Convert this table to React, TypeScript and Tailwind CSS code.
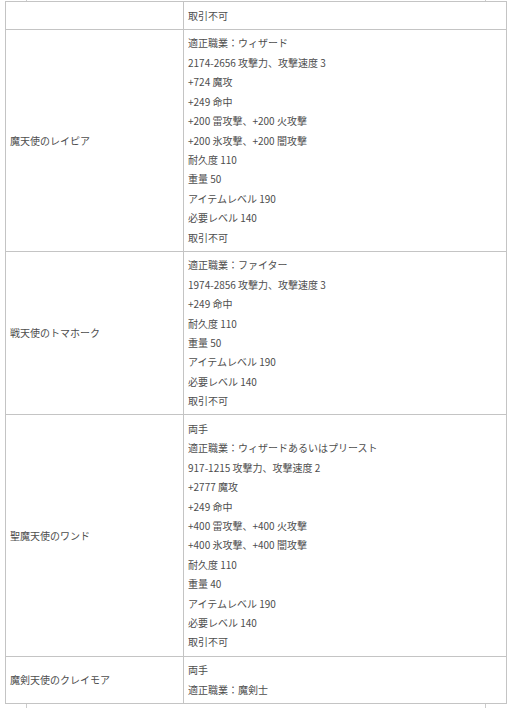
const rows: { name: string; lines: string[] }[] = [
  { name: "", lines: ["取引不可"] },
  {
    name: "魔天使のレイピア",
    lines: [
      "適正職業：ウィザード",
      "2174-2656 攻撃力、攻撃速度 3",
      "+724 魔攻",
      "+249 命中",
      "+200 雷攻撃、+200 火攻撃",
      "+200 氷攻撃、+200 闇攻撃",
      "耐久度 110",
      "重量 50",
      "アイテムレベル 190",
      "必要レベル 140",
      "取引不可",
    ],
  },
  {
    name: "戦天使のトマホーク",
    lines: [
      "適正職業：ファイター",
      "1974-2856 攻撃力、攻撃速度 3",
      "+249 命中",
      "耐久度 110",
      "重量 50",
      "アイテムレベル 190",
      "必要レベル 140",
      "取引不可",
    ],
  },
  {
    name: "聖魔天使のワンド",
    lines: [
      "両手",
      "適正職業：ウィザードあるいはプリースト",
      "917-1215 攻撃力、攻撃速度 2",
      "+2777 魔攻",
      "+249 命中",
      "+400 雷攻撃、+400 火攻撃",
      "+400 氷攻撃、+400 闇攻撃",
      "耐久度 110",
      "重量 40",
      "アイテムレベル 190",
      "必要レベル 140",
      "取引不可",
    ],
  },
  { name: "魔剣天使のクレイモア", lines: ["両手", "適正職業：魔剣士"] },
];

export default function App() {
  return (
    <div className="w-[512px] h-[708px] bg-white overflow-hidden font-['Noto_Sans_CJK_JP',sans-serif] text-[10px] leading-[19.4px] text-[#4d4d4d]">
      {/* outer frame peeking above and below the table */}
      <div className="ml-[26px] w-[460px] border-x border-[#ccc] pt-px pb-[6px]">
        <table className="-ml-[22px] w-[502px] border-collapse bg-white table-fixed">
          <colgroup>
            <col className="w-[178px]" />
            <col />
          </colgroup>
          <tbody>
            {rows.map((row, i) => (
              <tr key={i}>
                <td className="border border-[#c4c4c4] px-[4px] align-middle">{row.name}</td>
                <td className="border border-[#c4c4c4] px-[4px] py-[3.7px] align-top">
                  {row.lines.map((line, j) => (
                    <div key={j}>{line}</div>
                  ))}
                </td>
              </tr>
            ))}
          </tbody>
        </table>
      </div>
    </div>
  );
}
